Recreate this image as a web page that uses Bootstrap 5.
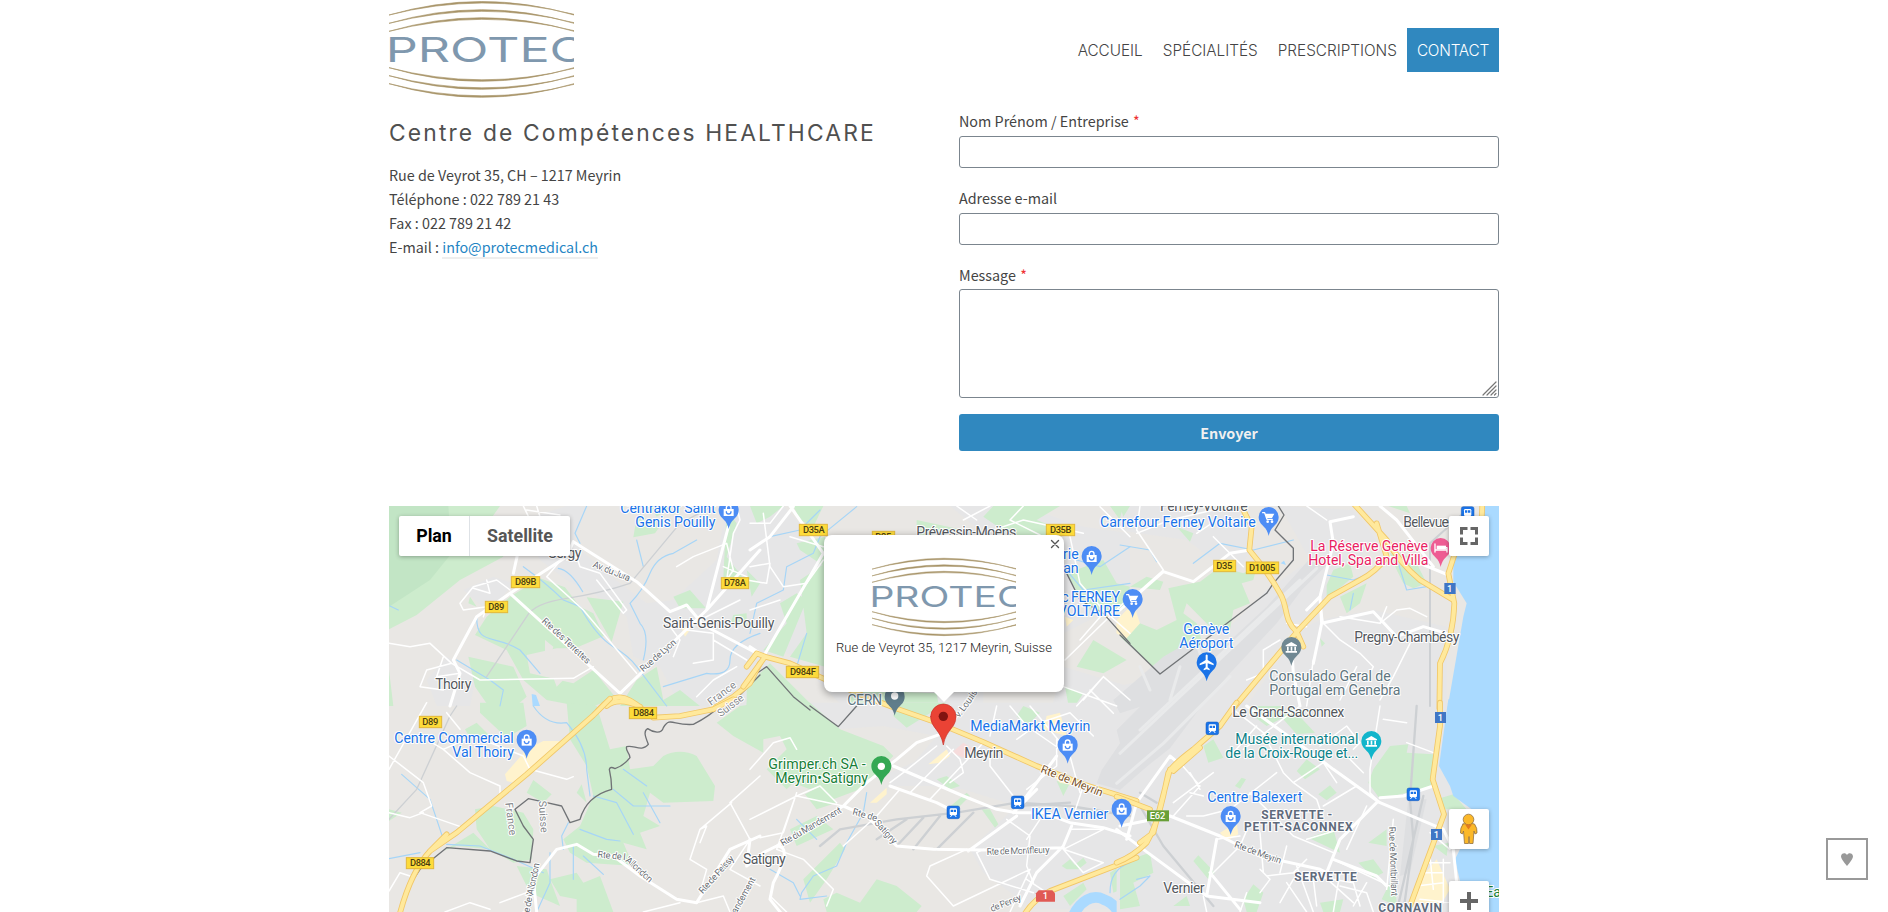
<!DOCTYPE html>
<html lang="fr">
<head>
<meta charset="utf-8">
<meta name="viewport" content="width=device-width, initial-scale=1">
<title>Contact – Protec</title>
<link href="https://cdn.jsdelivr.net/npm/bootstrap@5.3.0/dist/css/bootstrap.min.css" rel="stylesheet">
<style>
body{font-family:"Noto Sans CJK JP","Noto Sans",sans-serif;font-size:14.35px;line-height:24px;color:#444;height:912px;overflow:hidden}
.page-wrap{width:1110px}
.site-head{height:100px}
.site-logo{width:185px;height:99px;display:block}
.menu-top{padding-top:28px}
.menu-top .nav-link{font-family:Inter,sans-serif;font-weight:300;font-size:15.3px;line-height:24px;color:#444;padding:11px 10px 9px;letter-spacing:0}
.menu-top .nav-link.active{background:#3088bf;color:#fff;letter-spacing:-.2px}
h1{font-family:Inter,sans-serif;font-weight:400;font-size:22.8px;line-height:32px;letter-spacing:2.16px;color:#505050;margin:17px 0 14px;white-space:nowrap}
.mail-link{color:#2585c4;text-decoration:none;border-bottom:2px solid #eee;line-height:20px;display:inline-block}
.form-label{line-height:24px;margin:0 0 3px;display:block}
.req-star{color:#e33;margin-left:1px}
.form-control{border:1px solid #7b858e;border-radius:3px;padding:4px;height:32px}
textarea.form-control{height:109px;resize:none}
.grip{position:absolute;right:2px;bottom:2px}
.btn-send{background:#3088bf;color:#f0f0f0;font-weight:700;border:0;border-radius:3px;height:37px;line-height:24px;padding:6px;font-size:14.35px}
.map-box{height:406px;font-family:Roboto,sans-serif;overflow:hidden;background:#e9e7e4}
.map-box .ctl{position:absolute;background:#fff;border-radius:2px;box-shadow:0 1px 4px rgba(0,0,0,.3)}
.sq{right:10px;width:40px;height:40px}
.type-ctl{left:10px;top:10px;height:40px;font-size:17.8px;line-height:39px}
.bubble{position:absolute;left:435px;top:29px;width:240px;height:157px;background:#fff;border-radius:8px;box-shadow:0 2px 7px 1px rgba(0,0,0,.3);font-size:13px;font-weight:300;color:#222}
.bubble:after{content:"";position:absolute;left:109px;top:156px;border:11px solid transparent;border-top-color:#fff;border-bottom:0}
.bubble .logo-small{width:144px;height:80px;margin-top:22px}
.fav-box{position:fixed;right:20px;top:838px;width:42px;height:42px;border:2px solid #999}
.ub{fill:#e6e6e7}.gr{fill:#cdeccd}.gd{fill:#c2e5c5}.ye{fill:#fff3cd}.lk{fill:#aadaff}.ap{fill:#dedfe1}
.st{fill:none;stroke:#a6d5f7;stroke-width:3.5}.rl{fill:none;stroke:#cdd0d3;stroke-width:4}
.r1{fill:none;stroke:#fff;stroke-width:4.5}.r2{fill:none;stroke:#fff;stroke-width:9}
.bd{fill:none;stroke:#707376;stroke-width:4}
.hc{fill:none;stroke:#f1c768;stroke-width:17}.hf{fill:none;stroke:#ffe99c;stroke-width:12}
path{stroke-linejoin:round;stroke-linecap:round}
.tx text{paint-order:stroke;stroke:#fff;stroke-width:6px;stroke-linejoin:round;font-size:42.5px;fill:#54585d}
.tx .b{fill:#1a73e8}.tx .g{fill:#188038}.tx .t{fill:#0d8288}.tx .p{fill:#e91e63}.tx .s{fill:#607680}
.tx .d{font-weight:700;font-size:36px;fill:#5f6b7c}.tx .r{font-size:28px;fill:#686d73}.tx .c{font-size:32px;fill:#85888b}
.tx .sh rect{fill:#fddb3a;stroke:#e3b83a;stroke-width:3}.tx .sh text{font-size:28px;font-weight:500;fill:#4a3d10;stroke:none}
.tx .nr{stroke:none;fill:#fff;font-size:28px;font-weight:500}
.wh{fill:none;stroke:#fff;stroke-width:4}
</style>
</head>
<body class="bg-white">
<div class="page-wrap mx-auto">
<header class="site-head d-flex justify-content-between">
<a href="#" class="d-block">
<svg class="site-logo" viewBox="27 2 555 297" role="img" aria-label="Protec">
<g id="protec">
<g fill="#a89468" stroke="#a89468" stroke-width="2">
<path d="M27 47Q305 -34 582 47V45Q305 -24 27 47Z"/><path d="M27 72Q305 -10 582 72V70Q305 1 27 72Z"/><path d="M27 96Q305 14 582 96V94Q305 25 27 96Z"/>
<path d="M27 205Q305 287 582 205V207Q305 277 27 205Z"/><path d="M27 229Q305 311 582 229V231Q305 301 27 229Z"/><path d="M27 253Q305 335 582 253V255Q305 325 27 253Z"/>
</g>
<text x="17" y="188" textLength="602" lengthAdjust="spacingAndGlyphs" font-family="Inter,sans-serif" font-size="104" fill="#7f98ae" font-weight="400">PROTEC</text>
</g>
</svg></a>
<ul class="nav menu-top flex-nowrap">
<li class="nav-item"><a class="nav-link" href="#">ACCUEIL</a></li>
<li class="nav-item"><a class="nav-link" href="#">SPÉCIALITÉS</a></li>
<li class="nav-item"><a class="nav-link" href="#">PRESCRIPTIONS</a></li>
<li class="nav-item"><a class="nav-link active" href="#">CONTACT</a></li>
</ul>
</header>
<main>
<div class="d-flex justify-content-between" style="height:406px">
<section>
<h1>Centre de Compétences HEALTHCARE</h1>
<p class="m-0">Rue de Veyrot 35, CH – 1217 Meyrin<br>Téléphone : 022 789 21 43<br>Fax : 022 789 21 42<br>E-mail : <a class="mail-link" href="#">info@protecmedical.ch</a></p>
</section>
<form style="width:540px;padding-top:9px">
<label class="form-label" for="n">Nom Prénom / Entreprise <span class="req-star">*</span></label>
<input id="n" class="form-control" style="margin-bottom:18px">
<label class="form-label" for="m">Adresse e-mail</label>
<input id="m" class="form-control" style="margin-bottom:18px">
<label class="form-label" for="t" style="margin-bottom:2px">Message <span class="req-star">*</span></label>
<div class="position-relative" style="margin-bottom:16px"><textarea id="t" class="form-control"></textarea>
<svg class="grip" width="15" height="15"><path d="M1 14L14 1M5 14L14 5M9 14L14 9M12.500 14L14 12.500" stroke="#777" stroke-width="1.200"/></svg></div>
<button type="button" class="btn btn-send w-100">Envoyer</button>
</form>
</div>
<section class="map-box position-relative">
<svg class="d-block" width="1110" height="406" viewBox="389 506 1110 406">
<defs>
<path id="pin" d="M-30 0a30 30 0 0 1 60 0c0 18-12 24-20 34-6 8-8 16-10 23-2-7-4-15-10-23-8-10-20-16-20-34z"/>
<g id="bag"><path fill="#fff" d="M-15-5H15V16H-15Z"/><path class="wh" d="M-7-5V-9a7 7 0 0 1 14 0v4"/><path d="M-7 3a7 7 0 0 0 14 0" fill="none" stroke="#4d8df5" stroke-width="4"/></g>
<g id="cart"><path class="wh" d="M-18-15h6L-5 5H11"/><path fill="#fff" d="M-10-12H17L10 1H-6Z"/><circle cx="-3" cy="12" r="4" fill="#fff"/><circle cx="10" cy="12" r="4" fill="#fff"/></g>
<g id="bank"><path fill="#fff" d="M-17-6 0-16 17-6V-3H-17ZM-17 11H17V16H-17ZM-13-2h5V10h-5ZM-2-2h5V10h-5ZM9-2h5V10H9Z"/></g>
<g id="train"><rect x="-19" y="-19" width="38" height="38" rx="6" fill="#1a73e8" stroke="#1258b8" stroke-width="1.5"/><rect x="-11" y="-12" width="22" height="21" rx="4" fill="#fff"/><path fill="#1a73e8" d="M-8-8h7v7h-7ZM1-8h7v7H1Z"/><path stroke="#fff" stroke-width="3" d="M-8 13l4-5M8 13l-4-5"/></g>
<g id="h4"><path d="M1140 490 1110 550 1060 590 1000 625M655 630Q690 590 720 592T790 630M680 618Q715 590 780 620"/></g>
<g id="h5"><path d="M690 -22Q660 8 640 28L440 205 230 380 150 435Q90 500 55 640M820 35 900 30 1000 10 1060 -20M150 435 200 385"/></g>
<g id="h6"><path d="M-20 560 45 470 120 490 230 540 370 600M45 470 20 460 -10 500"/></g>
<g id="h7"><path d="M380 -15 440 8 560 50 700 108 860 180 1000 235 1160 285M1160 455 900 555Q850 580 820 630"/></g>
<g id="h8"><path d="M355 0 395 80 388 150Q440 210 480 280C505 320 490 360 530 395L550 440M700 10 800 120Q840 190 900 240L1000 300M770 70 800 170Q770 215 720 240L630 290 540 385 340 625M1087 10 1085 60 1003 165 985 220 1003 310Q1000 410 960 490L958 625"/></g>
<g id="h9"><path d="M350 -10 300 60 220 130Q160 175 145 200L130 270Q110 360 80 410 40 450 -10 470M-10 272 90 310M960 -10 960 60 938 220 972 325 950 385 870 600M240 125 160 195M150 190 100 380 60 410"/></g>
</defs>
<g id="areas">
<g transform="translate(380 500) scale(.33333)">
<path class="ub" d="M430 60 560 18 620 20 580 130 680 220 800 310 880 300 1010 180 1040 18H1160V618H900L840 500 760 470 740 350 640 280 560 240 480 180ZM140 540 200 470 290 520 270 618H170ZM250 270 340 230 400 250 330 340Z"/>
<path class="gr" d="M27 18H360L330 60 370 170 240 240 110 345 27 388Z"/><path class="gd" d="M27 18H205L215 160 150 240 27 320Z"/>
<path class="gr" d="M390 290 480 235 555 262 600 320 640 340 672 408 585 445 530 445 440 465 450 520 580 550 640 510 705 590 630 625 500 600 430 540 380 450 285 405 320 350ZM620 292 730 305 695 425ZM265 470 400 500 440 590 400 625H330L285 560ZM810 18H880L830 50ZM770 52 850 65 825 100 760 112ZM1040 30 1070 70 1040 170 1090 235 1030 235ZM880 290 930 270 978 325 900 325ZM1060 345 1110 338 1100 375 1050 375ZM770 540 830 500 850 600 900 570 960 618H720ZM270 290 290 320 265 310ZM27 510 40 618H27ZM1140 400 1100 450 1140 470Z"/>
<path fill="#e9e7e4" d="M495 420 520 440 510 475 495 470ZM515 520 550 540 530 560Z"/>
<path class="ye" d="M905 385 940 375 915 410Z"/><path class="lk" d="M455 582 468 585 480 618H458Z"/>
</g>
<g transform="translate(380 706) scale(.33333)">
<path class="gr" d="M300 -10H430L440 60 380 95 300 20ZM255 70 290 50 330 90 270 95ZM560 -10 650 0 690 130 740 120 750 190 820 180 850 150Q900 125 950 150L1005 240 1000 285 850 290 810 260 790 330 840 360 780 380 800 430 730 410 760 480 620 470 570 440 550 400 600 360 640 270 620 180 570 100ZM1010 50 1080 0 1150 -10V140L1060 90ZM440 260 460 222 515 265 490 290ZM285 310 340 300 430 320 460 370 455 460 400 470 330 430 230 420 190 435 280 380 330 430 290 370ZM590 260 605 235 620 290ZM27 310 65 320 27 345ZM410 480 500 490 510 520 540 600 450 560ZM510 520 590 500 610 530 660 510 700 618H590L590 580 540 570Z"/>
<path class="ye" d="M440 130 490 105H540L460 180 400 230 380 225 375 205Z"/>
</g>
<g transform="translate(750 500) scale(.33333)">
<path class="ub" d="M-10 18 100 18 160 80 220 160V500L60 440 -10 500ZM600 18H820L1000 80 1140 100V300L940 400V200L700 100ZM940 500 1140 560V640H900ZM200 540 700 560V640H300Z"/>
<path class="gr" d="M0 18 100 18 60 50 20 70ZM130 18H220L190 80 150 60ZM140 130 225 110V200L150 150ZM90 310 140 280 170 300 100 470 40 450 110 370ZM-10 210 30 250 5 290ZM150 240 225 190V500L120 470 170 400ZM-10 560 60 490 180 610 180 640H-10ZM500 60 640 90 610 105H500ZM730 18H930L860 60 960 100 930 105H780L700 50ZM950 220 1060 180 1100 250 1140 260 1120 330 1030 340 990 290ZM1030 420 1130 480 1060 520 980 500ZM945 560 1000 580 960 640ZM300 570 560 580 570 640H300ZM1080 18H1140L1110 60Z"/>
<path class="ye" d="M1100 360 1150 310V430L1100 400ZM945 350 970 360 950 380Z"/>
</g>
<g transform="translate(750 706) scale(.33333)">
<path class="ub" d="M180 -10H1150V610H850L700 500 660 430 800 300 640 250 440 230 560 90 400 60 260 70ZM420 200 600 120 640 240 420 240Z"/>
<path class="gr" d="M-10 -10H180L270 70 400 120 430 150 330 250 250 280 210 240 180 250 130 230 110 250 50 190 110 130 90 90 -10 110ZM440 -10H590L470 65 430 30ZM165 265 210 240 260 290 200 310ZM120 370 200 330 250 370 140 420ZM160 520 270 410 285 430 230 520 180 590ZM220 580 260 560 330 590 380 520 440 540 515 600 500 618H230ZM560 220 590 210 630 240 600 250ZM590 310 650 260 660 270 620 310ZM695 310 720 310 745 355 735 365ZM935 480 960 460 985 490 950 490ZM970 480 1000 455 1010 470 985 490ZM940 570 1000 530 1010 550 960 600ZM1080 500 1140 460V540L1090 560ZM820 0 870 20 830 60 800 30ZM920 225 960 230 940 270Z"/>
<path class="ye" d="M535 175 590 130 600 150 570 170ZM360 290 410 245 410 265 380 290ZM890 30 930 20 950 90 880 70ZM900 200 960 210 980 240 930 230Z"/>
<path fill="#f6dcdc" d="M605 140 640 110 690 140 640 155Z"/>
<path d="M965 640C990 580 1030 565 1060 580 1090 590 1105 610 1110 640" fill="none" stroke="#aadaff" stroke-width="32"/>
</g>
<g transform="translate(1120 706) scale(.33333)">
<path class="ub" d="M-10 -10H990L957 180 1060 310 1020 618H-10Z"/>
</g>
<g transform="translate(1120 500) scale(.33333)">
<path class="ub" d="M10 18H370L400 130 350 230 200 120 -10 90ZM600 360 760 330 980 380V618H380L540 390ZM480 18 700 30 770 120 630 260 600 340 530 370 500 300 570 180ZM-10 560 160 520 330 380 440 270 540 200 620 170 560 330 330 630H-10Z"/>
<path class="gr" d="M0 18H30L10 50ZM30 260 80 230 130 245 120 270ZM145 265 190 255 240 245 300 200 370 220 410 200 400 240 365 250 390 310 340 330 330 390 270 380 200 310 190 340 230 370 250 440 120 520 0 410 60 370 110 390 170 360ZM620 255 640 210 690 190 700 230 640 280 620 290ZM660 290 740 250 720 310 680 340ZM810 160 880 170 920 250 880 265 850 250 830 210ZM170 80 220 100 210 125ZM805 18 870 40 860 18ZM600 415 615 430 605 440Z"/>
<path class="ap" d="M575 170 620 195 545 270 470 370 330 520 240 625 150 745 80 800 0 870 -70 850 -55 810 0 730 -10 690 60 620 0 640 -20 600 130 470 200 430 250 450 300 450 440 320Z"/>
<path d="M590 205 150 618 0 760M540 240 60 690M330 530 130 730-10 850M60 500 90 570M230 430 260 520M180 500 150 600" fill="none" stroke="#e9eaeb" stroke-width="9"/>
<path class="ye" d="M-10 370 40 310 60 370 20 415 -10 400Z"/>
<path class="lk" d="M1095 18H1150V640H980L1030 350 1040 310 1000 245V170L1090 60ZM482 190 492 182 498 195Z"/>
</g>
<g transform="translate(1120 706) scale(.33333)">
<path class="ap" d="M865 280 920 280 870 500 840 510Z"/>
<path class="gr" d="M380 0H490L500 30 440 60 400 30ZM490 40 510 0 585 80 530 85ZM250 120 280 100 310 155 265 170ZM530 195 560 160 600 190 555 220ZM595 265 630 238 650 260 620 283ZM345 240 365 215 378 220 360 248ZM760 190 810 120 865 115 860 140 940 145 935 240 860 260 780 280 745 230ZM565 395 640 370 660 440ZM745 410 800 370 800 420ZM715 470 760 460 790 500 760 515ZM220 465 235 448 285 500 265 520ZM0 470 90 440 100 500 40 530 60 600 0 610ZM785 580 825 500 830 600ZM370 580 400 535 430 560 410 618H380ZM600 590 670 580 660 618H610ZM950 280 1000 265 1040 310H975ZM940 420 985 410 980 450ZM160 600 200 570 210 600Z"/>
<path class="ye" d="M300 380 350 350 355 385 320 405ZM900 520 950 460 990 550 960 600 880 590Z"/>
<path class="lk" d="M985 -20 957 180 990 240 1000 270 1055 310 1020 430 1005 460 1020 525 1030 640H1150V-20Z"/>
</g>
</g>
<g id="lines">
<g transform="translate(380 500) scale(.33333)">
<path class="st" d="M620 18 585 100 600 130M430 200Q500 250 550 300L600 320Q650 410 700 440T770 500L860 618M290 350C290 440 340 400 420 450L480 520M535 205Q570 210 608 275M790 480Q810 400 780 370L750 310Q790 270 810 220T880 160L950 120M1140 400Q1050 430 1050 480T980 520L850 560M770 120 790 200M30 318 55 330M230 480 330 540 370 570 360 618"/>
<path class="rl" d="M320 530 440 350Q460 310 560 295T750 250L900 70 1000 18"/>
<path class="r1" d="M430 18 460 80 410 170M540 45 440 30M470 18 480 50M240 310 280 260 350 240 390 270M240 310 250 330 320 320M280 265 330 280 320 240M310 350 320 320M500 230 560 160M560 180 590 170 600 200 660 220 740 330 730 340 650 240M27 430 90 440 150 430 215 490 140 510 120 560 190 570M215 490 300 540 580 535 640 500M500 230 610 330 770 520M890 200 940 170 1040 130 1060 210 1040 240 1060 100 1080 60 1070 20M1030 200 1100 230M870 380 900 420 880 470M920 390 1000 400 1000 480 940 490M960 360 1080 300M1000 420 1100 480M950 590 1000 540 1070 500M190 470 170 530 240 520"/>
<path class="r2" d="M210 618 240 520 220 480 290 350 390 280 560 170 580 125 770 245 870 335 920 315 970 375 1140 465M390 280 720 580 980 330 1140 150M400 220 420 130M980 330 1045 80"/>
<path class="bd" d="M1140 525 1085 580 1030 630"/>
</g>
<g transform="translate(380 706) scale(.33333)">
<path class="st" d="M460 0Q500 60 560 50 620 120 620 190L630 270M65 205 150 280 190 400M27 458 120 440M730 190 800 240M700 250 760 300 870 300M640 270 710 290 760 385M790 260 840 350M600 370 680 400 720 405M565 350 545 390 550 430M200 415 300 420 400 460 490 500M510 440V530L470 618M580 420V520M610 450 670 505"/>
<path class="rl" d="M27 340 110 250 210 30 230 0"/>
<path class="r1" d="M140 -10 27 190M140 100 190 130 280 90 430 150 450 190 560 220 580 212M190 130 270 200 360 240 360 270M27 150 130 230 155 300 120 320 250 365M27 320 90 335 130 320M200 20 240 70M450 190 370 270M27 555 60 500 90 510M195 618 270 590 330 610M360 590 440 560 450 618M790 618 900 590M950 590 1030 570 1050 618M1055 290 960 370 930 460 980 490 960 560M1050 290 1110 400M1050 290 1140 210M1110 400 1050 490 1140 540M960 370 980 360 960 410"/>
<path class="r2" d="M470 618 460 520 530 430 590 415 640 445 700 450 780 510 890 580 950 590 1050 430 1140 390"/>
<path class="bd" d="M60 630Q70 560 120 490L200 425 330 435 410 465 450 470 460 400 430 360 405 310 445 278 500 290 545 300 570 350 600 340Q620 270 695 250Q695 220 688 190 690 180 705 188 730 180 750 155C750 140 735 135 740 122 760 115 785 140 805 115 795 90 790 75 803 68 820 80 845 85 850 65 870 30 880 60 940 55Q990 30 1020 0"/>
</g>
<g transform="translate(750 500) scale(.33333)">
<path class="st" d="M320 20 210 110 190 160 110 200 100 270 20 310 0 400M210 30 150 90 60 110M170 400 140 500M940 200 1000 270 1140 250M980 180 1050 200 1140 140"/>
<path class="r1" d="M0 70 60 70 100 18M0 200 60 190 50 250 -10 240M40 40 60 200 100 260 170 250 220 180M120 110 220 140M640 60 720 18M700 100 820 60 1000 100M820 18 780 60 870 105M620 18 680 60M1050 20 1140 110M960 110 990 250 1060 330 1140 400M990 420 1060 340M945 480 1140 290M940 560 1100 618M1000 600 1060 530 1140 600M0 330 90 300M1060 530 980 618M1020 570 1090 640"/>
<path class="r2" d="M120 18 220 160 40 470M0 150 60 110 130 20M0 440 45 470"/>
<path class="bd" d="M-10 540 50 500 130 590 180 630M940 200 990 300 1060 340 1140 430"/>
</g>
<g transform="translate(750 706) scale(.33333)">
<path class="st" d="M350 260 340 320 290 410 260 480 190 510 155 560 150 580 230 570M60 490 130 530 150 570M140 340 200 400M1140 470Q1080 490 1080 560"/>
<path class="rl" style="stroke-width:7" d="M210 420 270 370 440 340 620 320 800 290 960 300 1140 330M380 400 470 340M440 420 520 335M490 430 570 330M560 430 670 320M800 300 960 290"/>
<path class="r1" d="M0 190 70 110 120 95 140 130M0 340 140 270 280 300M80 430 140 260 100 380 30 395M140 270 210 240 260 290M420 230 460 200 560 120M450 250 380 330 280 420M480 260 610 130M540 280 700 110M590 120 630 160 640 200 600 230M720 130 720 180 790 270M530 510 540 480 650 430M530 510 610 600 840 490M60 570 110 618M80 430 160 460 250 550 230 600M770 340 840 390 830 480 850 530M870 340 830 400M960 370 1060 370 940 430 1060 470 1000 500 940 430M720 90 740 0M780 0 830 60 960 150 990 260M640 0 600 70M840 0 940 120M840 490 780 618M830 250 920 180 920 100M800 100 870 50 960 20 1030 90M1000 240 970 330M700 430 680 440 720 520 850 560M830 520 890 560"/>
<path class="r2" d="M0 400 -10 480 40 440 80 420 280 300 350 230 440 160 500 110 570 85M430 180 640 270 740 310 800 320 880 320 960 350 1060 365 1140 390M80 420Q130 420 70 530L60 580 100 630M420 240 560 290 600 310M280 300 350 330 440 420 550 430 700 432 940 425M810 600 860 500 940 420 965 360M655 435 800 330M860 250 790 320 830 270 920 150"/>
<path class="bd" d="M180 0 265 62 320 0"/>
</g>
<g transform="translate(1120 500) scale(.33333)">
<path class="st" d="M0 135 90 150 110 185M220 190 300 130 400 150 520 120M620 225 700 240 750 220M835 190 860 270 920 260M690 330 700 280"/>
<path class="rl" style="stroke-width:6" d="M1030 40 930 130V618"/>
<path class="r1" d="M60 18 50 90 130 210M130 210 40 290M50 100 150 60 280 30M280 110 370 200M290 60 230 100M560 18 620 60M600 300 610 370 660 420 720 460 760 500 740 540M480 420 430 450 430 520 380 540M600 290 560 330M660 350 780 370 800 320M780 370 830 330 870 325 920 350M870 430 820 530 780 600M500 370 560 380M580 480 560 618M710 500 660 600"/>
<path class="r2" d="M0 330 130 215 220 245 330 160 390 150M630 65 640 130 600 290 605 370 580 490M630 65 700 50M605 370 760 335 830 410 910 380 980 400M800 170 900 190 985 225M560 330 600 290M515 440 520 520 540 618M780 18 830 60 940 200"/>
<path class="bd" d="M475 18 492 45 465 90 520 145 520 180 460 250 440 280 120 522 0 405"/>
</g>
<g transform="translate(1120 706) scale(.33333)">
<path class="st" d="M0 580 60 540 90 510 50 520"/>
<path class="rl" style="stroke-width:7" d="M890 0 870 280 880 400 850 618M910 270 880 400 830 618M60 300 130 420 280 600M60 260 110 290"/>
<path class="r1" d="M180 170 240 240 160 330M240 250 210 200M280 200 160 290M210 260 250 270M340 10 430 80 490 200 520 230 590 280 600 310M410 60 340 140M370 130 540 0M470 200 330 310 250 330 200 330M600 120 680 60 720 110 700 130M520 230 610 170 650 230M610 300 660 270 710 240M390 260 520 390 640 440M390 350 360 420 270 510M420 380 430 500M500 420 480 500M290 400 360 390M420 490 450 520 420 560M440 510 520 500 560 460M500 530 560 618M520 500 700 530 720 600M640 460 810 540M680 430 740 300M560 400 660 370M660 500 640 618M600 500 700 590M580 520 590 600M530 480 580 618M480 590 520 520M740 530 700 600M780 0 750 190 750 260 770 280M730 200 690 160M790 40 860 50M860 110 940 140M820 340 800 550M920 470 990 470M900 500 970 500M890 540 970 530M930 450 940 550M970 460 970 590M900 580 1000 590M930 380 990 430M380 560 360 618M250 570 260 618M660 540 740 560 760 618"/>
<path class="r2" d="M0 360 150 330 300 390 420 450 600 490 620 500M-10 370 70 430 260 570 290 400M260 570 420 590M180 175 150 150 50 290 20 400M380 0 600 160 640 190 780 290 970 370M770 290 660 400 620 500M780 275 850 270 940 240M970 370 1000 430 1010 530M640 460 770 510 800 540M270 500 360 610"/>
</g>
<g transform="translate(380 500) scale(.33333)"><use href="#h4" class="hc"/><use href="#h4" class="hf"/></g>
<g transform="translate(380 706) scale(.33333)"><use href="#h5" class="hc"/><use href="#h5" class="hf"/></g>
<g transform="translate(750 500) scale(.33333)"><use href="#h6" class="hc"/><use href="#h6" class="hf"/></g>
<g transform="translate(750 706) scale(.33333)"><use href="#h7" class="hc"/><use href="#h7" class="hf"/></g>
<g transform="translate(1120 500) scale(.33333)"><use href="#h8" class="hc"/><use href="#h8" class="hf"/></g>
<g transform="translate(1120 706) scale(.33333)"><use href="#h9" class="hc"/><use href="#h9" class="hf"/></g>
</g>
<g class="tx">
<g transform="translate(380 500) scale(.33333)">
<text class="b" x="721" y="39" textLength="286">Centrakor Saint</text><text class="b" x="766" y="82" textLength="240">Genis Pouilly</text>
<text x="505" y="175" textLength="99">Sergy</text><text x="849" y="383" textLength="334">Saint-Genis-Pouilly</text><text x="166" y="566" textLength="108">Thoiry</text>
<text class="r" transform="translate(637 200) rotate(22)" textLength="118">Av. du Jura</text>
<text class="r" transform="translate(484 365) rotate(43)" textLength="188">Rte des Terrettes</text>
<text class="r" transform="translate(790 517) rotate(-41)" textLength="133">Rue de Lyon</text>
<text class="c" transform="translate(993 618) rotate(-37)" textLength="98">France</text><text class="c" transform="translate(1022 652) rotate(-37)" textLength="90">Suisse</text>
<use href="#pin" x="1046" y="30" fill="#4d8df5"/><use href="#bag" x="1046" y="32"/>
<g class="sh"><rect x="394" y="230" width="85" height="33"/><text x="405" y="256" textLength="64">D89B</text><rect x="316" y="304" width="67" height="34"/><text x="325" y="331" textLength="48">D89</text><rect x="1024" y="233" width="82" height="33"/><text x="1032" y="259" textLength="66">D78A</text></g>
</g>
<g transform="translate(380 706) scale(.33333)">
<text class="b" x="43" y="111" textLength="358">Centre Commercial</text><text class="b" x="217" y="153" textLength="185">Val Thoiry</text>
<use href="#pin" x="440" y="101" fill="#4d8df5"/><use href="#bag" x="440" y="103"/>
<text class="c" transform="translate(376 291) rotate(83)" textLength="99">France</text><text class="c" transform="translate(476 285) rotate(86)" textLength="96">Suisse</text>
<text class="r" transform="translate(652 454) rotate(6)" textLength="84">Rte de l</text><text class="r" transform="translate(734 464) rotate(42)" textLength="100">'Allondon</text>
<text class="r" transform="translate(446 628) rotate(-78)" textLength="158">te de l'Allondon</text>
<text class="r" transform="translate(968 565) rotate(-48)" textLength="143">Rte de Peissy</text><text class="r" transform="translate(1069 625) rotate(-61)" textLength="120">andement</text>
<text x="1089" y="473" textLength="128">Satigny</text>
<g class="sh"><rect x="118" y="31" width="67" height="34"/><text x="127" y="58" textLength="48">D89</text><rect x="748" y="4" width="82" height="34"/><text x="760" y="31" textLength="62">D884</text><rect x="79" y="455" width="82" height="33"/><text x="90" y="481" textLength="62">D884</text></g>
</g>
<g transform="translate(750 500) scale(.33333)">
<text x="499" y="110" textLength="300">Prévessin-Moëns</text><text class="b" x="986" y="177" text-anchor="end">Boulangerie</text><text class="b" x="986" y="219" text-anchor="end">Jean</text>
<text class="b" x="1110" y="306" text-anchor="end" textLength="236">Parc FERNEY</text><text class="b" x="1110" y="348" text-anchor="end">VOLTAIRE</text><text class="s" x="292" y="615" textLength="104">CERN</text>
<text class="r" transform="translate(655 618) rotate(-56)" textLength="130">ouis-Rendu</text>
<use href="#pin" x="1025" y="168" fill="#4d8df5"/><use href="#bag" x="1025" y="170"/>
<use href="#pin" x="434" y="590" fill="#607d8b"/><circle cx="434" cy="588" r="11" fill="#fff"/>
<g class="sh"><rect x="148" y="73" width="84" height="34"/><text x="159" y="100" textLength="65">D35A</text><rect x="367" y="94" width="67" height="34"/><text x="376" y="120" textLength="48">D35</text><rect x="889" y="73" width="85" height="34"/><text x="900" y="100" textLength="64">D35B</text><rect x="109" y="499" width="97" height="34"/><text x="120" y="526" textLength="78">D984F</text></g>
</g>
<g transform="translate(750 706) scale(.33333)">
<text class="b" x="661" y="75" textLength="360">MediaMarkt Meyrin</text><text x="643" y="155" textLength="117">Meyrin</text><text class="g" x="55" y="189" textLength="292">Grimper.ch SA -</text><text class="g" x="76" y="231" textLength="278">Meyrin•Satigny</text><text class="b" x="843" y="339" textLength="232">IKEA Vernier</text>
<text class="r" transform="translate(98 421) rotate(-30)" textLength="206">Rte du Mandement</text><text class="r" transform="translate(306 325) rotate(16)" textLength="76">Rte de</text><text class="r" transform="translate(372 352) rotate(48)" textLength="86">Satigny</text>
<text class="r" transform="translate(710 447) rotate(-2)" textLength="189">Rte de Montfleury</text><text class="r" transform="translate(725 618) rotate(-22)" textLength="98">de Peney</text>
<text transform="translate(870 198) rotate(22)" textLength="198" style="font-size:34px;fill:#7a5228">Rte de Meyrin</text><text class="r" transform="translate(628 36) rotate(-53)" textLength="66">v. Lou</text>
<use href="#pin" x="394" y="180" fill="#34a853"/><circle cx="394" cy="181" r="11" fill="#fff"/><use href="#pin" x="953" y="116" fill="#4d8df5"/><use href="#bag" x="953" y="118"/><use href="#pin" x="1115" y="308" fill="#4d8df5"/><use href="#bag" x="1115" y="310"/>
<use href="#train" x="610" y="319"/><use href="#train" x="803" y="289"/>
<path d="M866 553H907L915 562V587H858V562Z" fill="#e05a55"/><text x="878" y="580" class="nr">1</text>
<path d="M542 32a38 38 0 0 1 76 0C618 66 588 70 580 117 572 70 542 66 542 32Z" fill="#ea4335" stroke="#c5322a" stroke-width="2"/><circle cx="580" cy="31" r="14" fill="#811411"/>
</g>
<g transform="translate(1120 500) scale(.33333)">
<text x="120" y="33" textLength="263">Ferney-Voltaire</text><text class="b" x="-60" y="81" textLength="467">Carrefour Ferney Voltaire</text><text x="850" y="81" textLength="137">Bellevue</text>
<text class="p" x="571" y="154" textLength="353">La Réserve Genève</text><text class="p" x="565" y="196" textLength="360">Hotel, Spa and Villa</text><text class="b" x="190" y="402" textLength="138">Genève</text><text class="b" x="178" y="444" textLength="162">Aéroport</text>
<text x="703" y="426" textLength="315">Pregny-Chambésy</text><text class="s" x="448" y="543" textLength="364">Consulado Geral de</text><text class="s" x="448" y="585" textLength="393">Portugal em Genebra</text>
<use href="#pin" x="446" y="51" fill="#4d8df5"/><use href="#cart" x="446" y="53"/><use href="#pin" x="38" y="297" fill="#4d8df5"/><use href="#cart" x="38" y="299"/><use href="#pin" x="962" y="144" fill="#ee5c93"/><path d="M945 132V156M945 150H981V156M981 150V143H957" fill="none" stroke="#fff" stroke-width="4"/><path d="M950 137H978V148H950Z" fill="#fff"/>
<use href="#pin" x="260" y="487" fill="#1a73e8"/><path fill="#fff" d="M257 466q3-5 6 0v14l18 11v5l-18-6v12l6 5v4l-9-3-9 3v-4l6-5v-12l-18 6v-5l18-11z"/><use href="#pin" x="514" y="441" fill="#6f8792"/><use href="#bank" x="514" y="442"/><use href="#train" x="1043" y="39"/>
<g class="sh"><rect x="281" y="181" width="66" height="34"/><text x="289" y="208" textLength="48">D35</text><rect x="379" y="186" width="97" height="35"/><text x="387" y="214" textLength="79">D1005</text></g>
<rect x="973" y="249" width="34" height="33" fill="#3f76c5"/><text x="981" y="276" class="nr">1</text>
</g>
<g transform="translate(1120 706) scale(.33333)">
<text x="337" y="33" textLength="336">Le Grand-Saconnex</text><text class="t" x="346" y="114" textLength="369">Musée international</text><text class="t" x="316" y="156" textLength="399">de la Croix-Rouge et...</text><text class="b" x="262" y="288" textLength="285">Centre Balexert</text>
<text class="d" x="424" y="339" textLength="213">SERVETTE -</text><text class="d" x="372" y="375" textLength="326">PETIT-SACONNEX</text><text class="d" x="523" y="525" textLength="187">SERVETTE</text><text class="d" x="775" y="617" textLength="191">CORNAVIN</text><text x="130" y="560" textLength="124">Vernier</text><text class="g" x="1096" y="572">Eaux</text>
<text class="r" transform="translate(341 423) rotate(20)" textLength="148">Rte de Meyrin</text><text class="r" transform="translate(807 362) rotate(88)" textLength="208">Rue de Montbrillant</text>
<use href="#pin" x="754" y="105" fill="#12b5cb"/><use href="#bank" x="754" y="106"/><use href="#pin" x="332" y="330" fill="#4d8df5"/><use href="#bag" x="332" y="332"/><use href="#train" x="277" y="67"/><use href="#train" x="880" y="265"/>
<rect x="945" y="18" width="33" height="33" fill="#3f76c5"/><rect x="933" y="369" width="33" height="33" fill="#3f76c5"/><text x="953" y="45" class="nr">1</text><text x="941" y="396" class="nr">1</text>
<rect x="81" y="313" width="66" height="33" fill="#689f38"/><text x="89" y="340" textLength="47" class="nr">E62</text>
</g>
</g>
</svg>
<div class="ctl type-ctl d-flex"><div class="text-black fw-bold text-center" style="width:70px">Plan</div><div class="text-center fw-bold border-start" style="width:101px;color:#565656">Satellite</div></div>
<div class="ctl sq" style="top:10px"><svg class="d-block" width="40" height="40"><path d="M12.500 17V12.500H17M23 12.500H27.500V17M27.500 23V27.500H23M17 27.500H12.500V23" fill="none" stroke="#666" stroke-width="3" style="stroke-linecap:square;stroke-linejoin:miter"/></svg></div>
<div class="ctl sq" style="top:303px"><svg class="d-block" width="40" height="40"><g fill="#fbb829" stroke="#927141" stroke-width=".8"><path d="M14 15q-3 4-2.500 9l2 1 1-3 1 12.500h4l.5-7 .5 7h3.500l1-12.500 1 3 2-1q.5-5-2.500-9-6-2-11.500 0z"/><circle cx="19.500" cy="10.500" r="5.300"/></g><path d="M16 15.500h7l-3.500 5z" fill="#e17b20"/></svg></div>
<div class="ctl sq" style="top:375px"><svg class="d-block" width="40" height="40"><path d="M11 18H18V11H22V18H29V22H22V29H18V22H11Z" fill="#666"/></svg></div>
<div class="bubble text-center"><svg class="logo-small d-block mx-auto" viewBox="27 2 555 297" preserveAspectRatio="none"><use href="#protec"/></svg><div class="text-nowrap" style="line-height:20px;margin-top:1px">Rue de Veyrot 35, 1217 Meyrin, Suisse</div>
<svg style="position:absolute;right:4px;top:4px" width="10" height="10"><path d="M1.500 1.500l7 7M8.500 1.500l-7 7" stroke="#555" stroke-width="1.400"/></svg></div>
</section>
</main>
</div>
<div class="fav-box d-flex align-items-center justify-content-center"><svg width="12" height="13" viewBox="0 0 12 13"><path d="M6 13Q0 6 0 3.500C0 0 4.500-1 6 2 7.500-1 12 0 12 3.500Q12 6 6 13Z" fill="#999"/></svg></div>
<script src="https://cdn.jsdelivr.net/npm/bootstrap@5.3.0/dist/js/bootstrap.bundle.min.js"></script>
</body>
</html>
